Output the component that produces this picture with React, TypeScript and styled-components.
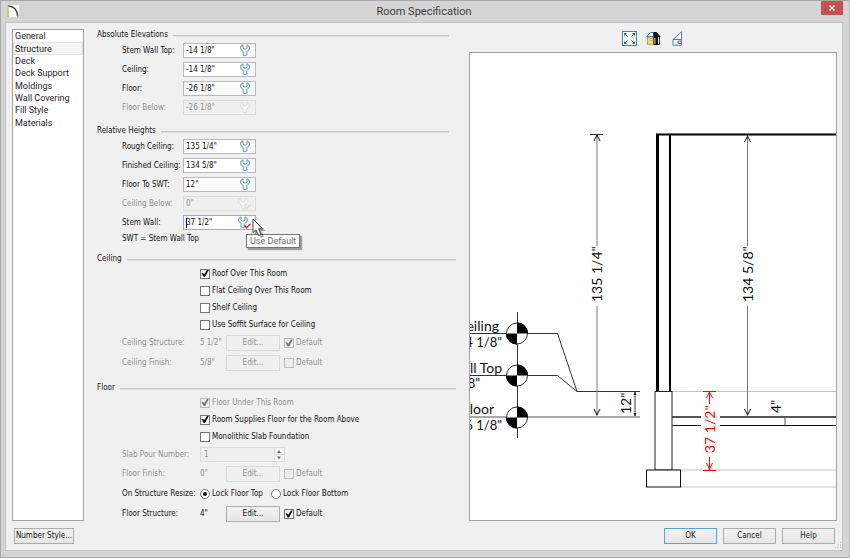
import React, { useState } from 'react';
import styled, { createGlobalStyle, css } from 'styled-components';

const ui = '"DejaVu Sans Condensed", "DejaVu Sans", sans-serif';
const segoe = 'Roboto, "Open Sans", sans-serif';
const drafting = 'Lato, "Open Sans", sans-serif';

const GlobalStyle = createGlobalStyle`
  *, *::before, *::after { box-sizing: border-box; }
  body { margin: 0; background: #d4d4d4; }
  button, input { font: inherit; color: inherit; margin: 0; }
`;

const Dialog = styled.div`
  display: flex;
  flex-direction: column;
  min-height: 100vh;
  padding: 0 6px 6px 4px;
  background: #d4d4d4;
  border: 1px solid #a8a8a8;
  border-right-color: #bcbcbc;
  color: #141414;
  font: 8px/12px ${ui};
`;

const TitleBar = styled.header`
  display: grid;
  grid-template-columns: 22px 1fr 22px;
  align-items: start;
  height: 21px;
`;

const AppIcon = styled.svg`
  width: 12px;
  height: 12px;
  margin: 4px 0 0 2px;
  background: #fff;
`;

const Title = styled.h1`
  margin: 0;
  text-align: center;
  color: #3c3c3c;
  font: 400 11px/21px ${segoe};
`;

const CloseButton = styled.button`
  display: flex;
  align-items: center;
  justify-content: center;
  height: 14px;
  padding: 0;
  border: 0;
  background: #c75050;
`;

const Body = styled.main`
  display: flex;
  flex: 1;
  flex-direction: column;
  padding: 6px 5px 6px 6px;
  background: #f0f0f0;
  border: 1px solid #c3c3c3;
`;

const Content = styled.div`
  display: grid;
  flex: 1;
  grid-template-columns: 72px minmax(359px, 1fr) minmax(300px, 369px);
  gap: 13px;
`;

const CategoryPane = styled.nav`
  background: #fff;
  border: 1px solid #a0a3ad;
`;

const CategoryList = styled.ul`
  display: grid;
  grid-template-rows: repeat(8, minmax(0, 1fr));
  height: 99px;
  margin: 0;
  padding: 0;
  list-style: none;
  font: 9px/10px ${segoe};
`;

const Category = styled.button<{ $selected: boolean }>`
  display: flex;
  align-items: center;
  width: 100%;
  height: 100%;
  padding: 0 1px;
  border: 1px solid ${p => (p.$selected ? '#e2e2e2' : 'transparent')};
  background: ${p => (p.$selected ? '#f5f5f5' : 'transparent')};
  color: #2b1c2c;
  white-space: nowrap;
`;

const Form = styled.form`
  display: flex;
  flex-direction: column;
  margin-bottom: -4px;
`;

const Section = styled.section<{ $gap?: number; $inset?: number }>`
  margin-top: ${p => p.$gap || 0}px;
  padding-right: ${p => p.$inset || 0}px;
`;

const SectionTitle = styled.h2`
  display: flex;
  align-items: center;
  gap: 5px;
  margin: 0;
  font-size: 8px;
  font-weight: 400;
  line-height: 12px;
  &::after {
    content: '';
    flex: 1;
    height: 1px;
    background: #c4c4c4;
    box-shadow: 0 1px 0 #e4e4e4;
  }
`;

const Row = styled.div<{ $height: number; $wide?: boolean; $disabled?: boolean }>`
  display: grid;
  grid-template-columns: ${p => (p.$wide ? 78 : 61)}px 1fr;
  align-items: center;
  height: ${p => p.$height}px;
  padding-left: 25px;
  white-space: nowrap;
  color: ${p => (p.$disabled ? '#909090' : 'inherit')};
`;

const Cells = styled.div`
  display: flex;
  grid-column: 2;
  align-items: center;
`;

const Amount = styled.output`
  width: 26px;
`;

const Field = styled.div`
  position: relative;
  display: flex;
  align-items: center;
  width: 73px;
`;

const HeightInput = styled.input<{ $active?: boolean }>`
  width: 73px;
  height: 15px;
  padding: 0 20px 0 2px;
  border: 1px solid ${p => (p.$active ? '#7eb4ea' : '#b9b9bd')};
  background: #fff;
  outline: 0;
  &:disabled {
    background: #efefef;
    border-color: #dadada;
    color: #909090;
  }
`;

const DefaultButton = styled.button`
  position: absolute;
  right: 4px;
  display: flex;
  padding: 0;
  border: 0;
  background: none;
`;

const Caret = styled.span`
  position: absolute;
  left: 3px;
  width: 1px;
  height: 10px;
  background: #000;
`;

const Tooltip = styled.div`
  position: absolute;
  left: 63px;
  top: 19px;
  z-index: 1;
  padding: 0 3px;
  border: 1px solid #767676;
  background: #fff;
  box-shadow: 2px 2px 1px #9c9c9c;
  color: #6a6a6a;
  font: 9px/12px ${segoe};
`;

const Pointer = styled.svg`
  position: absolute;
  left: 69px;
  top: 3px;
  z-index: 2;
  width: 13px;
  height: 20px;
  overflow: visible;
`;

const Choice = styled.label<{ $disabled?: boolean; $gap?: number }>`
  display: inline-flex;
  align-items: center;
  gap: 2px;
  margin-left: ${p => p.$gap || 0}px;
  color: ${p => (p.$disabled ? '#909090' : 'inherit')};
`;

const mark = css`
  appearance: none;
  display: grid;
  place-items: center;
  width: 10px;
  height: 10px;
  border: 1px solid #767676;
  background: #fff;
  color: #111;
  &:disabled { background: #ededed; border-color: #bcbcbc; color: #707070; }
`;

const CheckInput = styled.input`
  ${mark}
  &:checked::before {
    content: '';
    width: 8px;
    height: 8px;
    background: currentColor;
    clip-path: polygon(5% 45%, 25% 40%, 40% 60%, 75% 5%, 98% 5%, 50% 95%, 33% 95%);
  }
`;

const RadioInput = styled.input`
  ${mark}
  border-radius: 50%;
  &:checked::before {
    content: '';
    width: 4px;
    height: 4px;
    border-radius: 50%;
    background: currentColor;
  }
`;

const PushButton = styled.button<{ $width: number; $primary?: boolean }>`
  width: ${p => p.$width}px;
  height: 16px;
  padding: 0;
  border: 1px solid ${p => (p.$primary ? '#5aa0e6' : '#adadad')};
  background: linear-gradient(#f2f2f2, #e6e6e6);
  line-height: 12px;
  white-space: nowrap;
  &:disabled { background: #efefef; border-color: #d9d9d9; color: #909090; }
`;

const Spin = styled.div`
  display: flex;
  width: 85px;
  height: 15px;
  border: 1px solid #dadada;
`;

const SpinInput = styled.input`
  flex: 1;
  min-width: 0;
  padding: 0 3px;
  border: 0;
  background: #efefef;
  color: #909090;
`;

const SpinArrows = styled.svg`
  width: 10px;
  height: 13px;
  background: #f3f3f3;
`;

const PreviewColumn = styled.div`
  display: flex;
  flex-direction: column;
`;

const PreviewTools = styled.div`
  display: flex;
  justify-content: center;
  gap: 9px;
  height: 23px;
`;

const ToolButton = styled.button`
  display: flex;
  height: 17px;
  padding: 2px 0 0;
  border: 0;
  background: none;
`;

const Preview = styled.div`
  flex: 1;
  min-height: 469px;
  background: #fff;
  border: 1px solid #a0a3ad;
`;

const Drawing = styled.svg`
  display: block;
  width: 100%;
  height: 100%;
  font-family: ${drafting};
`;

const Footer = styled.footer`
  display: flex;
  gap: 6px;
  align-items: flex-start;
  height: 23px;
  padding: 7px 0 0 2px;
`;

const Spacer = styled.div`
  flex: 1;
`;

const Grip = styled.svg`
  align-self: flex-end;
  width: 7px;
  height: 7px;
  margin: 0 -5px -5px -6px;
`;

const Wrench = ({ disabled, tick }: { disabled?: boolean; tick?: boolean }) => (
  <svg width={tick ? 14 : 13} height="13" viewBox={tick ? '0 0 14 13' : '-1 0 13 13'} fill="none">
    <path
      d="M3 .8 Q.5 1.6 .5 4 Q.5 6.4 3.2 7.4 V11 Q5 12.8 6.8 11 V7.4 Q9.5 6.4 9.5 4 Q9.5 1.6 7 .8 V4 L6 5 H4 L3 4 Z"
      fill={disabled ? '#f8f8f8' : '#f2fafd'}
      stroke={disabled ? '#d9d9d9' : '#4a90b2'}
      strokeWidth=".9"
    />
    {tick && <path d="M6.6 9.5 L8.4 11.8 L12.6 7.8" stroke={disabled ? '#dedede' : '#e02424'} strokeWidth="1.4" />}
  </svg>
);

type HeightProps = { label: string; value: string; disabled?: boolean; tick?: boolean; children?: React.ReactNode };

const HeightRow = ({ label, value, disabled, tick, children }: HeightProps) => {
  const id = label.toLowerCase().replace(/\W+/g, '-');
  return (
    <Row $height={19} $disabled={disabled}>
      <label htmlFor={id}>{label}</label>
      <Field>
        <HeightInput id={id} defaultValue={value} disabled={disabled} $active={!!children} />
        <DefaultButton type="button" aria-label="Use default" disabled={disabled}>
          <Wrench disabled={disabled} tick={tick} />
        </DefaultButton>
        {children}
      </Field>
    </Row>
  );
};

type CheckProps = { label: string; checked?: boolean; disabled?: boolean; gap?: number };

const Check = ({ label, checked, disabled, gap }: CheckProps) => (
  <Choice $disabled={disabled} $gap={gap}>
    <CheckInput type="checkbox" defaultChecked={checked} disabled={disabled} />
    {label}
  </Choice>
);

const CheckRow = (props: CheckProps) => (
  <Row $height={17} $wide>
    <Cells><Check {...props} /></Cells>
  </Row>
);

type MaterialProps = { label: string; value: string; checked?: boolean; disabled?: boolean };

const MaterialRow = ({ label, value, checked, disabled }: MaterialProps) => (
  <Row $height={20} $wide $disabled={disabled}>
    <span>{label}</span>
    <Cells>
      <Amount>{value}</Amount>
      <PushButton type="button" $width={54} disabled={disabled}>Edit...</PushButton>
      <Check label="Default" checked={checked} disabled={disabled} gap={4} />
    </Cells>
  </Row>
);

const LevelMark = ({ y }: { y: number }) => (
  <g>
    <circle cx="517" cy={y} r="10.5" fill="#fff" stroke="#333" />
    <path d={`M517 ${y} V${y - 11} A11 11 0 0 1 528 ${y} Z M517 ${y} V${y + 11} A11 11 0 0 1 506 ${y} Z`} />
  </g>
);

const up = (x: number, y: number) => `M${x - 3} ${y + 7} L${x} ${y + 1} L${x + 3} ${y + 7}`;
const down = (x: number, y: number) => `M${x - 3} ${y - 7} L${x} ${y - 1} L${x + 3} ${y - 7}`;

const WallSection = () => (
  <Drawing viewBox="470 53 367 467" preserveAspectRatio="xMinYMin slice" role="img" aria-label="Wall section">
    <g fill="none" stroke="#c4c4c4">
      <path d="M672 391.5 H837 M672 470 H837 M680 487 H837" />
    </g>
    <g fill="none" stroke="#333">
      <path d="M470 333.5 H557.5 L577 391.5 H640 M470 375.5 H557.5 L577 391.5 M517.5 312 V438" />
      <path d="M470 417 H640" stroke="#555" />
      <path d="M635 392 V416" />
      <path d="M590 134.5 H603" />
      <path d="M597 135 V246 M597 306 V416 M747.5 135 V246 M747.5 306 V416" stroke="#777" />
      <path d={`${up(597, 134)} ${down(597, 416)} ${up(747.5, 135)} ${down(747.5, 416)}`} stroke="#111" />
      <path d="M672 417 H701 M720 417 H837" stroke="#555" strokeWidth="2" />
      <path d="M672 425.5 H701 M720 425.5 H837" stroke="#111" />
      <path d="M785 418 V425" stroke="#555" />
    </g>
    <path d="M633.5 395 L635 392 L636.5 395 Z M633.5 413 L635 416 L636.5 413 Z" />
    <path d="M656 134.5 H837" stroke="#000" strokeWidth="2" />
    <path d="M657.5 134 V392" stroke="#000" strokeWidth="3" />
    <path d="M670 134 V392" stroke="#000" strokeWidth="2" />
    <rect x="655" y="391.5" width="17" height="78.5" fill="#fff" stroke="#222" />
    <rect x="646.5" y="470" width="34" height="17" fill="#fff" stroke="#111" />
    <LevelMark y={333.5} />
    <LevelMark y={375.5} />
    <LevelMark y={417.5} />
    <g fontSize="14" fill="#111">
      <text x="499" y="331" textAnchor="end">Ceiling</text>
      <text x="502" y="347" fontSize="13" textAnchor="end">-14 1/8"</text>
      <text x="502" y="373" textAnchor="end">Wall Top</text>
      <text x="480" y="388" fontSize="13" textAnchor="end">1/8"</text>
      <text x="494" y="414" textAnchor="end">Floor</text>
      <text x="502" y="430" fontSize="13" textAnchor="end">-26 1/8"</text>
      <text transform="translate(602 302) rotate(-90)">135 1/4"</text>
      <text transform="translate(753 302) rotate(-90)">134 5/8"</text>
      <text transform="translate(631 414) rotate(-90)">12"</text>
      <text transform="translate(781 413) rotate(-90)">4"</text>
    </g>
    <g fill="none" stroke="#ff0000">
      <path d={`M703 391.5 H716 M703 470.5 H716 M709.5 392 V404 M709.5 457 V470 ${up(709.5, 391)} ${down(709.5, 470)}`} />
    </g>
    <text transform="translate(715 453) rotate(-90)" fontSize="14" fill="#ff0000">37 1/2"</text>
  </Drawing>
);

const categories = ['General', 'Structure', 'Deck', 'Deck Support', 'Moldings', 'Wall Covering', 'Fill Style', 'Materials'];

export default function App() {
  const [category, setCategory] = useState('Structure');
  return (
    <>
      <GlobalStyle />
      <Dialog role="dialog" aria-label="Room Specification">
        <TitleBar>
          <AppIcon viewBox="0 0 12 12" fill="none">
            <path d="M1 0 V12" stroke="#9ccb3c" strokeWidth="1.5" />
            <path d="M1.5 1 C6.5 1 10.5 5 10.8 11.5" stroke="#444" strokeWidth="1.4" />
          </AppIcon>
          <Title>Room Specification</Title>
          <CloseButton type="button" aria-label="Close">
            <svg width="6" height="6" viewBox="0 0 6 6" stroke="#fff" strokeWidth="1.3">
              <path d="M.5 .5 L5.5 5.5 M5.5 .5 L.5 5.5" />
            </svg>
          </CloseButton>
        </TitleBar>
        <Body>
          <Content>
            <CategoryPane aria-label="Categories">
              <CategoryList>
                {categories.map(name => (
                  <li key={name}>
                    <Category type="button" $selected={name === category} onClick={() => setCategory(name)}>
                      {name}
                    </Category>
                  </li>
                ))}
              </CategoryList>
            </CategoryPane>

            <Form id="room-form" onSubmit={e => e.preventDefault()}>
              <Section $inset={7}>
                <SectionTitle>Absolute Elevations</SectionTitle>
                <HeightRow label="Stem Wall Top:" value={'-14 1/8"'} />
                <HeightRow label="Ceiling:" value={'-14 1/8"'} />
                <HeightRow label="Floor:" value={'-26 1/8"'} />
                <HeightRow label="Floor Below:" value={'-26 1/8"'} disabled />
              </Section>
              <Section $gap={8} $inset={7}>
                <SectionTitle>Relative Heights</SectionTitle>
                <HeightRow label="Rough Ceiling:" value={'135 1/4"'} />
                <HeightRow label="Finished Ceiling:" value={'134 5/8"'} />
                <HeightRow label="Floor To SWT:" value={'12"'} />
                <HeightRow label="Ceiling Below:" value={'0"'} disabled tick />
                <HeightRow label="Stem Wall:" value={'37 1/2"'} tick>
                  <Caret />
                  <Tooltip role="tooltip">Use Default</Tooltip>
                  <Pointer viewBox="0 0 13 20">
                    <path d="M3 3 V17 L6 14 L9 20 L12 18.5 L9 13 H13.5 Z" fill="#000" opacity=".35" />
                    <path d="M1 1 V14.5 L4 11.8 L6.6 17.4 L9.2 16.2 L6.6 10.8 H10.6 Z" fill="#fff" stroke="#444" />
                  </Pointer>
                </HeightRow>
                <Row $height={13}><span>SWT = Stem Wall Top</span></Row>
              </Section>
              <Section $gap={8}>
                <SectionTitle>Ceiling</SectionTitle>
                <CheckRow label="Roof Over This Room" checked />
                <CheckRow label="Flat Ceiling Over This Room" />
                <CheckRow label="Shelf Ceiling" />
                <CheckRow label="Use Soffit Surface for Ceiling" />
                <MaterialRow label="Ceiling Structure:" value={'5 1/2"'} checked disabled />
                <MaterialRow label="Ceiling Finish:" value={'5/8"'} disabled />
              </Section>
              <Section $gap={9}>
                <SectionTitle>Floor</SectionTitle>
                <CheckRow label="Floor Under This Room" checked disabled />
                <CheckRow label="Room Supplies Floor for the Room Above" checked />
                <CheckRow label="Monolithic Slab Foundation" />
                <Row $height={19} $wide $disabled>
                  <label htmlFor="slab-pour">Slab Pour Number:</label>
                  <Spin>
                    <SpinInput id="slab-pour" defaultValue="1" disabled />
                    <SpinArrows viewBox="0 0 10 13">
                      <path d="M.5 0 V13 M0 6.5 H10" stroke="#dedede" />
                      <path d="M3 5 L5 2.2 L7 5 Z M3 8.5 L5 11.2 L7 8.5 Z" fill="#666" />
                    </SpinArrows>
                  </Spin>
                </Row>
                <MaterialRow label="Floor Finish:" value={'0"'} disabled />
                <Row $height={20} $wide>
                  <span>On Structure Resize:</span>
                  <Cells role="radiogroup" aria-label="On Structure Resize">
                    <Choice><RadioInput type="radio" name="lock" defaultChecked />Lock Floor Top</Choice>
                    <Choice $gap={8}><RadioInput type="radio" name="lock" />Lock Floor Bottom</Choice>
                  </Cells>
                </Row>
                <MaterialRow label="Floor Structure:" value={'4"'} checked />
              </Section>
            </Form>

            <PreviewColumn>
              <PreviewTools>
                <ToolButton type="button" aria-label="Fill window">
                  <svg width="15" height="15" viewBox="0 0 15 15">
                    <rect x=".5" y=".5" width="14" height="14" fill="#fff" stroke="#3f86a8" />
                    <path d="M2 2 H5 L2 5 Z M13 2 V5 L10 2 Z M2 13 V10 L5 13 Z M13 13 H10 L13 10 Z" fill="#2c7090" />
                    <path d="M3 3 L5.5 5.5 M12 3 L9.5 5.5 M3 12 L5.5 9.5 M12 12 L9.5 9.5" stroke="#2c7090" />
                  </svg>
                </ToolButton>
                <ToolButton type="button" aria-label="Color on or off">
                  <svg width="15" height="15" viewBox="0 0 15 15">
                    <path d="M1.5 6 H7.5 V13.5 H1.5 Z" fill="#f8d58c" stroke="#d89a30" />
                    <rect x="4" y="7.5" width="2" height="2" fill="#fff" stroke="#d89a30" strokeWidth=".7" />
                    <path d="M.5 5.5 L4.5 1.5 H7.5 V5.5 Z" fill="#fff" stroke="#3f86a8" />
                    <path d="M7.5 1 H10.5 L14.8 5.8 H13.8 V14 H7.5 Z" fill="#111" />
                    <path d="M8.5 7 H9.3 V13 H8.5 Z M12 6 H13 V13 H12 Z" fill="#fff" />
                  </svg>
                </ToolButton>
                <ToolButton type="button" aria-label="Cross section">
                  <svg width="15" height="15" viewBox="0 0 15 15" fill="none" stroke="#3f86a8">
                    <path d="M11.5 .8 L3 8.5 V14.3 H11.5 Z" fill="#fff" />
                    <path d="M3 8.5 H11" />
                    <path d="M8 10 H11 V12.5 H8 Z" />
                    <path d="M11.5 2 V14" stroke="#c06070" strokeDasharray="1.5 2" />
                  </svg>
                </ToolButton>
              </PreviewTools>
              <Preview><WallSection /></Preview>
            </PreviewColumn>
          </Content>
          <Footer>
            <PushButton type="button" $width={60}>Number Style...</PushButton>
            <Spacer />
            <PushButton type="submit" form="room-form" $width={53} $primary>OK</PushButton>
            <PushButton type="button" $width={53}>Cancel</PushButton>
            <PushButton type="button" $width={53}>Help</PushButton>
            <Grip viewBox="0 0 7 7" fill="#b8b8b8">
              <path d="M5 0h1v1h-1z M5 2.5h1v1h-1z M5 5h1v1h-1z M2.5 2.5h1v1h-1z M2.5 5h1v1h-1z M0 5h1v1h-1z" />
            </Grip>
          </Footer>
        </Body>
      </Dialog>
    </>
  );
}
